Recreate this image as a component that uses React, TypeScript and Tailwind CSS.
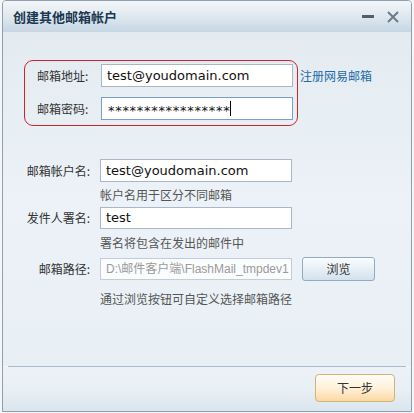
import React from 'react'

const cjk = "font-['Noto_Sans_CJK_SC',sans-serif]"
const latin = "font-['DejaVu_Sans','Noto_Sans_CJK_SC',sans-serif]"

const Label = ({ children }: { children: React.ReactNode }) => (
  <div className={`w-[77px] shrink-0 text-right pr-[10px] text-[12px] text-[#333] ${cjk}`}>{children}</div>
)

const Hint = ({ children, h }: { children: React.ReactNode; h: string }) => (
  <div className={`${h} flex items-center pl-[77px] text-[12px] text-[#555] ${cjk}`}>{children}</div>
)

const App: React.FC = () => {
  return (
    <div className="w-[414px] h-[413px] bg-[#f4f6f8] px-[2px] pb-[1px] flex flex-col">
      <div className="flex-1 flex flex-col border border-[#8d9fb1] rounded-t-[4px] overflow-hidden">
        {/* title bar */}
        <div className="h-[31px] shrink-0 flex items-center justify-between pl-[10px] pr-[12px] bg-gradient-to-b from-[#f3f6f9] via-[#dfe8ef] to-[#c6d6e3]">
          <span className={`text-[13px] font-bold text-[#1a3850] ${cjk}`}>创建其他邮箱帐户</span>
          <div className="flex items-center gap-[13px]">
            <div className="w-[12px] h-[3px] bg-[#4f5f6e]" />
            <svg width="12" height="12" viewBox="0 0 12 12">
              <path d="M1 1 L11 11 M11 1 L1 11" stroke="#6b7b8a" strokeWidth="2" />
            </svg>
          </div>
        </div>

        {/* body */}
        <div className="flex-1 bg-gradient-to-b from-[#e3ebf1] via-[#ecf2f7] to-[#e9f0f5] pl-[21px] pt-[28px]">
          <div className="flex items-start">
            <div className="w-[274px] h-[66px] border border-[#d2222c] rounded-[9px] pl-[12px] pt-[3px] flex flex-col gap-[10px]">
              <div className="flex items-center">
                <div className={`w-[64px] shrink-0 text-[12px] text-[#333] ${cjk}`}>邮箱地址:</div>
                <div className={`w-[192px] h-[23px] bg-white border border-[#a9b8c6] pl-[5px] flex items-center text-[13px] text-[#111] ${latin}`}>test@youdomain.com</div>
              </div>
              <div className="flex items-center">
                <div className={`w-[64px] shrink-0 text-[12px] text-[#333] ${cjk}`}>邮箱密码:</div>
                <div className={`w-[192px] h-[23px] bg-white border border-[#7c9fc9] pl-[6px] flex items-center text-[13px] text-[#111] ${latin}`}>
                  <span className="pt-[5px] tracking-[0.7px]">*****************</span>
                  <span className="w-px h-[15px] bg-black" />
                </div>
              </div>
            </div>
            <a className={`ml-[2px] mt-[7px] text-[12px] text-[#1d6aa5] ${cjk}`}>注册网易邮箱</a>
          </div>

          <div className="mt-[33px] -ml-[1px] flex flex-col">
            <div className="flex items-center">
              <Label>邮箱帐户名:</Label>
              <div className={`w-[192px] h-[23px] bg-white border border-[#a9b8c6] pl-[5px] flex items-center text-[13px] text-[#111] ${latin}`}>test@youdomain.com</div>
            </div>
            <Hint h="h-[25px]">帐户名用于区分不同邮箱</Hint>
            <div className="flex items-center">
              <Label>发件人署名:</Label>
              <div className={`w-[192px] h-[22px] bg-white border border-[#a9b8c6] pl-[5px] flex items-center text-[13px] text-[#111] ${latin}`}>test</div>
            </div>
            <Hint h="h-[28px]">署名将包含在发出的邮件中</Hint>
            <div className="flex items-center">
              <Label>邮箱路径:</Label>
              <div className={`w-[192px] h-[22px] bg-[#fbfcfd] border border-[#c2cdd7] pl-[5px] flex items-center overflow-hidden whitespace-nowrap text-[12px] text-[#9a9a9a] font-['Liberation_Sans','Noto_Sans_CJK_SC',sans-serif]`}>D:\邮件客户端\FlashMail_tmpdev1</div>
              <button className={`ml-[10px] w-[73px] h-[24px] rounded-[3px] border border-[#93abc2] bg-gradient-to-b from-[#fbfdfe] to-[#d3e1ee] text-[12px] text-[#333] ${cjk}`}>浏览</button>
            </div>
            <Hint h="h-[36px]">通过浏览按钮可自定义选择邮箱路径</Hint>
          </div>
        </div>

        {/* footer */}
        <div className="h-px shrink-0 mx-[5px] bg-[#a9bccd]" />
        <div className="h-[44px] shrink-0 bg-gradient-to-b from-[#ecf2f7] via-[#e9f0f5] to-[#dae5ee] flex items-start justify-end pr-[16px] pt-[7px]">
          <button className={`w-[80px] h-[28px] rounded-[4px] border border-[#d4b26f] bg-gradient-to-b from-[#fffdf8] via-[#fff1da] to-[#fcd9a4] text-[12px] text-[#333] ${cjk}`}>下一步</button>
        </div>
      </div>
    </div>
  )
}

export default App
